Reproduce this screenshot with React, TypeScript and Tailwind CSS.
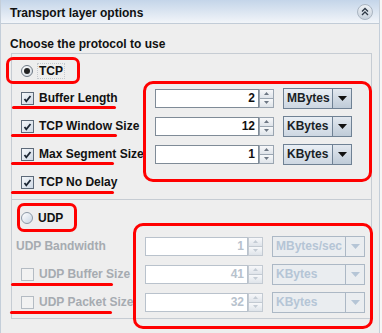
import React from "react";

const font = "font-['Liberation_Sans',Arial,sans-serif]";

const Check = ({ on, disabled }: { on?: boolean; disabled?: boolean }) => (
  <span
    className={`flex w-[13px] h-[13px] shrink-0 items-center justify-center border ${
      disabled
        ? "border-[#b4bbc3] bg-[#f2f2f2]"
        : "border-[#5d6a79] bg-gradient-to-br from-[#f4f7fa] to-[#cfd9e5]"
    }`}
  >
    {on && (
      <svg width="9" height="9" viewBox="0 0 9 9">
        <path d="M1.5 5 L3.3 7.2 L7.5 2" fill="none" stroke="#1b2633" strokeWidth="1.8" />
      </svg>
    )}
  </span>
);

const Radio = ({ on }: { on?: boolean }) => (
  <span
    className={`flex w-[12px] h-[12px] shrink-0 items-center justify-center rounded-full border ${
      on
        ? "border-[#6d7884] bg-gradient-to-br from-white to-[#d5dbe2]"
        : "border-[#8b98a6] bg-gradient-to-br from-white to-[#c9d6e4]"
    }`}
  >
    {on && <span className="w-[6px] h-[6px] rounded-full bg-[#222]" />}
  </span>
);

const Spinner = ({
  value,
  width,
  disabled,
}: {
  value: string;
  width: string;
  disabled?: boolean;
}) => (
  <div className="flex h-[19px]">
    <div
      className={`${width} h-full bg-white border flex items-center justify-end pr-[3px] ${
        disabled ? "border-[#b9c2cc] text-[#b7c2cd]" : "border-[#7f8b97] text-[#111]"
      }`}
    >
      {value}
    </div>
    <div className="flex flex-col w-[15px] h-full">
      {["up", "down"].map((d) => (
        <div
          key={d}
          className={`flex-1 flex items-center justify-center border bg-gradient-to-b from-[#f7f8fa] to-[#dfe4ea] ${
            disabled ? "border-[#c3cad2]" : "border-[#9aa5b1]"
          } ${d === "down" ? "border-t-0" : ""}`}
        >
          <svg width="5" height="3" viewBox="0 0 5 3">
            <path
              d={d === "up" ? "M0 3 L2.5 0 L5 3 Z" : "M0 0 L2.5 3 L5 0 Z"}
              fill={disabled ? "#c4ccd5" : "#6d7784"}
            />
          </svg>
        </div>
      ))}
    </div>
  </div>
);

const Combo = ({
  label,
  width,
  disabled,
}: {
  label: string;
  width: string;
  disabled?: boolean;
}) => (
  <div
    className={`${width} h-[21px] flex border ${
      disabled
        ? "border-[#acb8c5] bg-[#eaedf0] text-[#b5c5d6]"
        : "border-[#6f8194] bg-gradient-to-b from-[#eaeff5] to-[#cdd7e2] text-[#1a1f26]"
    }`}
  >
    <div className="flex-1 flex items-center pl-[3px]">{label}</div>
    <div
      className={`w-[19px] flex items-center justify-center border-l ${
        disabled ? "border-[#acb8c5]" : "border-[#6f8194] bg-gradient-to-b from-[#e2e8ef] to-[#bfcbd8]"
      }`}
    >
      <svg width="9" height="5" viewBox="0 0 9 5">
        <path d="M0 0 L9 0 L4.5 5 Z" fill={disabled ? "#b5c5d6" : "#111"} />
      </svg>
    </div>
  </div>
);

const Red = ({ className }: { className: string }) => (
  <div className={`absolute border-[3px] border-[#f00] ${className}`} />
);

const Line = ({ className }: { className: string }) => (
  <div className={`absolute h-[3px] bg-[#f00] rounded-full ${className}`} />
);

export default function App() {
  const tcpRows = [
    { label: "Buffer Length", value: "2", unit: "MBytes" },
    { label: "TCP Window Size", value: "12", unit: "KBytes" },
    { label: "Max Segment Size", value: "1", unit: "KBytes" },
  ];

  return (
    <div className={`relative w-[382px] h-[333px] overflow-hidden bg-[#f6f6f6] ${font} text-[12px] leading-[14px] font-bold`}>
      <div className="w-[380px] h-[333px] bg-[#eeeeee] border-l border-r border-[#c4ced9] flex flex-col">
        <div className="h-[24px] shrink-0 border-b border-[#c2ccd7] bg-gradient-to-b from-[#c4d5e9] to-[#f2f5f9] flex items-center justify-between pl-[9px] pr-[6px]">
          <span className="text-[#111] pt-[2px]">Transport layer options</span>
          <svg width="16" height="16" viewBox="0 0 16 16">
            <defs>
              <linearGradient id="cb" x1="0" y1="0" x2="0" y2="1">
                <stop offset="0" stopColor="#eef2f6" />
                <stop offset="1" stopColor="#c7d1dc" />
              </linearGradient>
            </defs>
            <circle cx="8" cy="8" r="7.5" fill="url(#cb)" stroke="#a9b4c1" />
            <path d="M5 7.5 L8 4.5 L11 7.5 M5 11 L8 8 L11 11" fill="none" stroke="#2d3845" strokeWidth="1.3" />
          </svg>
        </div>

        <div className="mt-[13px] pl-[9px] text-[#111]">Choose the protocol to use</div>

        <div className="mt-[2px] ml-[10px] w-[361px] h-[266px] border border-[#c6ccd3] flex flex-col">
          <div className="pt-[4px] pb-[3px] border-b border-[#c6ccd3]">
            <div className="h-[26px] flex items-center pl-[9px] gap-[4px] text-[#111]">
              <Radio on />
              <span className="border border-dotted border-[#c5c9ce] px-[1px]">TCP</span>
            </div>
            {tcpRows.map((r) => (
              <div key={r.label} className="h-[28px] flex items-center">
                <div className="w-[143px] flex items-center gap-[5px] pl-[9px] text-[#111]">
                  <Check on />
                  <span className="whitespace-nowrap">{r.label}</span>
                </div>
                <Spinner value={r.value} width="w-[104px]" />
                <div className="ml-[9px]">
                  <Combo label={r.unit} width="w-[69px]" />
                </div>
              </div>
            ))}
            <div className="h-[28px] flex items-center gap-[5px] pl-[9px] text-[#111]">
              <Check on />
              <span>TCP No Delay</span>
            </div>
          </div>

          <div className="pt-[4px]">
            <div className="h-[28px] flex items-center pl-[9px] gap-[5px] text-[#111]">
              <Radio />
              <span>UDP</span>
            </div>
            {[
              { label: "UDP Bandwidth", value: "1", unit: "MBytes/sec", check: false },
              { label: "UDP Buffer Size", value: "41", unit: "KBytes", check: true },
              { label: "UDP Packet Size", value: "32", unit: "KBytes", check: true },
            ].map((r) => (
              <div key={r.label} className="h-[28px] flex items-center">
                <div
                  className={`w-[133px] flex items-center gap-[5px] text-[#a6abb1] ${
                    r.check ? "pl-[9px]" : "pl-[4px]"
                  }`}
                >
                  {r.check && <Check disabled />}
                  <span className="whitespace-nowrap">{r.label}</span>
                </div>
                <Spinner value={r.value} width="w-[103px]" disabled />
                <div className="ml-[9px]">
                  <Combo label={r.unit} width="w-[93px]" disabled />
                </div>
              </div>
            ))}
          </div>
        </div>
      </div>

      <Red className="left-[6px] top-[57px] w-[74px] h-[27px] rounded-[7px]" />
      <Line className="left-[12px] top-[106px] w-[104px]" />
      <Line className="left-[11px] top-[134px] w-[106px]" />
      <Line className="left-[11px] top-[162px] w-[103px]" />
      <Line className="left-[11px] top-[191px] w-[103px]" />
      <Red className="left-[143px] top-[81px] w-[229px] h-[101px] rounded-[10px]" />

      <Red className="left-[17px] top-[203px] w-[60px] h-[29px] rounded-[7px]" />
      <Line className="left-[11px] top-[283px] w-[102px]" />
      <Line className="left-[10px] top-[311px] w-[102px]" />
      <Red className="left-[133px] top-[223px] w-[240px] h-[106px] rounded-[10px]" />
    </div>
  );
}
